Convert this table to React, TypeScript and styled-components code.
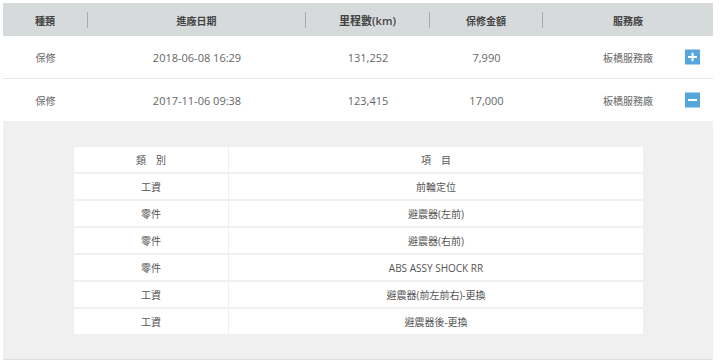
import React, { useState } from 'react';
import styled, { createGlobalStyle } from 'styled-components';

const GlobalStyle = createGlobalStyle`
  html, body {
    margin: 0;
    padding: 0;
    background: #fff;
  }
  body {
    font-family: "Open Sans", "Noto Sans CJK TC", sans-serif;
    color: #555;
  }
`;

interface Detail {
  kind: string;
  item: string;
}

interface Record {
  type: string;
  date: string;
  mileage: string;
  amount: string;
  shop: string;
  details: Detail[];
}

const records: Record[] = [
  {
    type: '保修',
    date: '2018-06-08 16:29',
    mileage: '131,252',
    amount: '7,990',
    shop: '板橋服務廠',
    details: [],
  },
  {
    type: '保修',
    date: '2017-11-06 09:38',
    mileage: '123,415',
    amount: '17,000',
    shop: '板橋服務廠',
    details: [
      { kind: '工資', item: '前輪定位' },
      { kind: '零件', item: '避震器(左前)' },
      { kind: '零件', item: '避震器(右前)' },
      { kind: '零件', item: 'ABS ASSY SHOCK RR' },
      { kind: '工資', item: '避震器(前左前右)-更換' },
      { kind: '工資', item: '避震器後-更換' },
    ],
  },
];

const columns = '85px 218px 124px 113px 1fr';

const Page = styled.div`
  padding: 3px 7px 0 3px;
`;

const HeaderRow = styled.div`
  display: grid;
  grid-template-columns: ${columns};
  height: 33px;
  background: #d7dadb;
`;

const HeaderCell = styled.div<{ divider?: boolean; cjk?: boolean }>`
  display: flex;
  align-items: center;
  justify-content: center;
  font-size: ${({ cjk }) => (cjk ? '10px' : '11px')};
  font-weight: 600;
  color: #444;
  border-right: ${({ divider }) => (divider ? '1px solid #a9acad' : 'none')};
  margin: 9px 0;
`;

const Row = styled.div<{ last?: boolean }>`
  display: grid;
  grid-template-columns: ${columns};
  height: 42px;
  border-bottom: ${({ last }) => (last ? 'none' : '1px solid #e8e8e8')};
`;

const Cell = styled.div<{ cjk?: boolean }>`
  position: relative;
  display: flex;
  align-items: center;
  justify-content: center;
  font-size: ${({ cjk }) => (cjk ? '10px' : '11px')};
  color: #666;
`;

const ToggleButton = styled.button`
  position: absolute;
  right: 13px;
  top: 50%;
  transform: translateY(-50%);
  width: 15px;
  height: 15px;
  padding: 0;
  border: none;
  background: #57a5dd;
  display: flex;
  align-items: center;
  justify-content: center;
  cursor: pointer;
`;

const Panel = styled.div`
  background: #f0f0f0;
  padding: 26px 70px 25px 71px;
  border-bottom: 1px solid #dedede;
`;

const DetailGrid = styled.div`
  display: grid;
  grid-template-columns: 154px 1fr;
  grid-auto-rows: 25px;
  gap: 2px 1px;
`;

const DetailCell = styled.div`
  background: #fff;
  display: flex;
  align-items: center;
  justify-content: center;
  font-size: 10px;
  color: #555;
`;

const PlusIcon = ({ open }: { open: boolean }) => (
  <svg width="9" height="9" viewBox="0 0 9 9">
    <rect x="0" y="3.5" width="9" height="2" fill="#fff" />
    {!open && <rect x="3.5" y="0" width="2" height="9" fill="#fff" />}
  </svg>
);

const App: React.FC = () => {
  const [open, setOpen] = useState<number | null>(1);

  return (
    <Page>
      <GlobalStyle />
      <HeaderRow>
        <HeaderCell divider cjk>種類</HeaderCell>
        <HeaderCell divider cjk>進廠日期</HeaderCell>
        <HeaderCell divider>里程數(km)</HeaderCell>
        <HeaderCell divider cjk>保修金額</HeaderCell>
        <HeaderCell cjk>服務廠</HeaderCell>
      </HeaderRow>
      {records.map((r, i) => (
        <React.Fragment key={r.date}>
          <Row last={i === records.length - 1}>
            <Cell cjk>{r.type}</Cell>
            <Cell>{r.date}</Cell>
            <Cell>{r.mileage}</Cell>
            <Cell>{r.amount}</Cell>
            <Cell cjk>
              {r.shop}
              <ToggleButton onClick={() => setOpen(open === i ? null : i)}>
                <PlusIcon open={open === i} />
              </ToggleButton>
            </Cell>
          </Row>
          {open === i && (
            <Panel>
              <DetailGrid>
                <DetailCell>類　別</DetailCell>
                <DetailCell>項　目</DetailCell>
                {r.details.map((d, j) => (
                  <React.Fragment key={j}>
                    <DetailCell>{d.kind}</DetailCell>
                    <DetailCell>{d.item}</DetailCell>
                  </React.Fragment>
                ))}
              </DetailGrid>
            </Panel>
          )}
        </React.Fragment>
      ))}
    </Page>
  );
};

export default App;
